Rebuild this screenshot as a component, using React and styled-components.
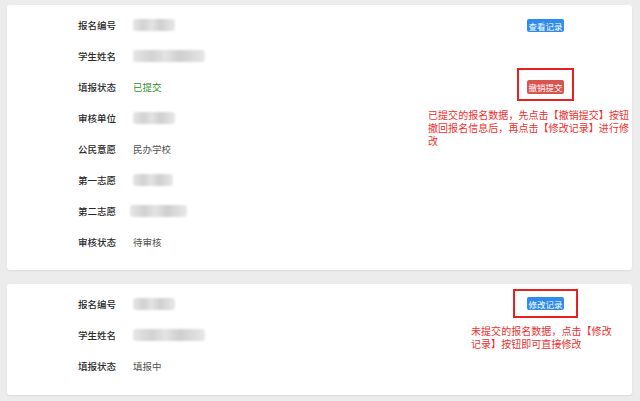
import React from "react";
import styled, { createGlobalStyle } from "styled-components";

const GlobalStyle = createGlobalStyle`
  html, body {
    margin: 0;
    padding: 0;
    background: #ececec;
    font-family: "Noto Sans CJK SC", "Noto Sans", sans-serif;
  }
`;

const Page = styled.div`
  width: 640px;
  height: 401px;
  padding: 5px 8px 0 7px;
  box-sizing: border-box;
  display: flex;
  flex-direction: column;
  gap: 14px;
  overflow: hidden;
`;

const Card = styled.div`
  background: #fff;
  border-radius: 3px;
  box-shadow: 0 1px 2px rgba(0, 0, 0, 0.08);
  display: flex;
  padding: ${(p) => p.pad};
`;

const List = styled.div`
  width: ${(p) => p.w}px;
  flex-shrink: 0;
  padding-left: 71px;
  box-sizing: border-box;
`;

const Row = styled.div`
  height: 31px;
  display: flex;
  align-items: center;
  font-size: 9.5px;
`;

const Label = styled.span`
  width: 55px;
  color: #2a2a2a;
  font-weight: 500;
`;

const Value = styled.span`
  color: ${(p) => (p.green ? "#2f8f2f" : "#555")};
`;

const Blur = styled.span`
  display: inline-block;
  width: ${(p) => p.w}px;
  height: 12px;
  margin-left: ${(p) => p.off || 0}px;
  border-radius: 3px;
  background: linear-gradient(
    90deg,
    #e6e6e6 0%,
    #d2d2d2 25%,
    #e3e3e3 45%,
    #cfcfcf 65%,
    #e8e8e8 100%
  );
  filter: blur(1.2px);
`;

const Side = styled.div`
  display: flex;
  flex-direction: column;
  align-items: flex-start;
  padding-top: ${(p) => p.top}px;
`;

const Btn = styled.span`
  display: inline-flex;
  align-items: center;
  justify-content: center;
  width: 37px;
  height: ${(p) => p.h || 13}px;
  border-radius: 2px;
  font-size: 8.5px;
  color: #fff;
  background: ${(p) => (p.red ? "#d9534f" : "#2f8ced")};
  margin-left: ${(p) => p.ml || 0}px;
`;

const Highlight = styled.div`
  border: 2px solid #e8201e;
  padding: ${(p) => p.pad};
  margin-left: ${(p) => p.ml}px;
  margin-top: ${(p) => p.mt}px;
  display: flex;
`;

const Note = styled.div`
  width: ${(p) => p.w}px;
  margin-top: ${(p) => p.mt}px;
  font-size: 10px;
  line-height: ${(p) => p.lh}px;
  color: #f0302f;
  letter-spacing: 0.05px;
`;

export default function App() {
  return (
    <>
      <GlobalStyle />
      <Page>
        <Card pad="4px 0 13px 0">
          <List w={421}>
            <Row>
              <Label>报名编号</Label>
              <Blur w={42} />
            </Row>
            <Row>
              <Label>学生姓名</Label>
              <Blur w={72} />
            </Row>
            <Row>
              <Label>填报状态</Label>
              <Value green>已提交</Value>
            </Row>
            <Row>
              <Label>审核单位</Label>
              <Blur w={42} />
            </Row>
            <Row>
              <Label>公民意愿</Label>
              <Value>民办学校</Value>
            </Row>
            <Row>
              <Label>第一志愿</Label>
              <Blur w={40} />
            </Row>
            <Row>
              <Label>第二志愿</Label>
              <Blur w={57} off={-3} />
            </Row>
            <Row>
              <Label>审核状态</Label>
              <Value>待审核</Value>
            </Row>
          </List>
          <Side top={10}>
            <Btn ml={99}>查看记录</Btn>
            <Highlight ml={89} mt={36} pad="10px 8px 5px 8px">
              <Btn red h={14}>撤销提交</Btn>
            </Highlight>
            <Note w={206} mt={7} lh={13}>
              已提交的报名数据，先点击【撤销提交】按钮撤回报名信息后，再点击【修改记录】进行修改
            </Note>
          </Side>
        </Card>
        <Card pad="4px 0 14px 0">
          <List w={464}>
            <Row>
              <Label>报名编号</Label>
              <Blur w={42} />
            </Row>
            <Row>
              <Label>学生姓名</Label>
              <Blur w={72} />
            </Row>
            <Row>
              <Label>填报状态</Label>
              <Value>填报中</Value>
            </Row>
          </List>
          <Side top={1}>
            <Highlight ml={42} mt={0} pad="6px 12px">
              <Btn>修改记录</Btn>
            </Highlight>
            <Note w={146} mt={7} lh={12.5}>
              未提交的报名数据，点击【修改记录】按钮即可直接修改
            </Note>
          </Side>
        </Card>
      </Page>
    </>
  );
}
